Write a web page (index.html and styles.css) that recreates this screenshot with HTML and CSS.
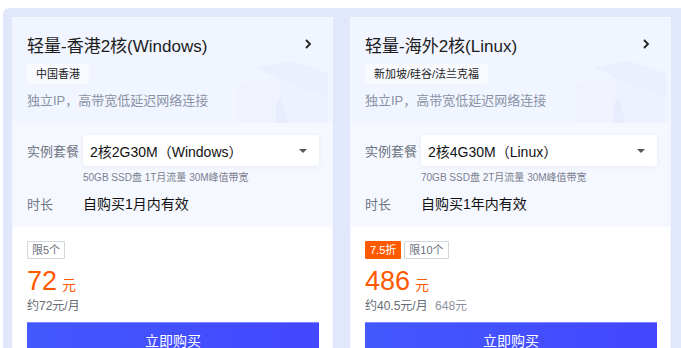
FILE: index.html
```html
<!DOCTYPE html>
<html lang="zh-CN">
<head>
    <meta charset="UTF-8">
    <title>轻量应用服务器</title>
    <link rel="stylesheet" href="styles.css">
</head>
<body>
    <div class="panel">
        <div class="card">
            <div class="card-head">
                <svg class="deco" width="92" height="66" viewBox="0 0 92 66">
                    <path d="M2 26 L40 22 L92 38 L92 66 L2 66 Z" fill="#eef2fe"/>
                    <path d="M20 10 L56 4 L92 16 L92 40 L56 28 Z" fill="#ebf0fe"/>
                    <path d="M30 66 L44 40 L52 66 Z" fill="#e8edfd"/>
                    <path d="M2 26 L40 22 L40 66 L2 66 Z" fill="#f0f3fe"/>
                </svg>
                <div class="title-row">
                    <span class="title">轻量-香港2核(Windows)</span>
                    <svg class="chev" width="8" height="10" viewBox="0 0 8 10"><path d="M2 1 L6 5 L2 9" fill="none" stroke="#222" stroke-width="1.8"/></svg>
                </div>
                <span class="region">中国香港</span>
                <p class="desc">独立IP，高带宽低延迟网络连接</p>
            </div>
            <div class="card-config">
                <div class="row">
                    <span class="label">实例套餐</span>
                    <div class="select">
                        <span>2核2G30M（Windows）</span>
                        <span class="caret"></span>
                    </div>
                </div>
                <div class="spec">50GB SSD盘 1T月流量 30M峰值带宽</div>
                <div class="row">
                    <span class="label">时长</span>
                    <span class="value">自购买1月内有效</span>
                </div>
            </div>
            <div class="card-buy">
                <div class="badges">
                    <span class="limit">限5个</span>
                </div>
                <div class="price"><span class="num">72</span><span class="unit">元</span></div>
                <div class="monthly">约72元/月</div>
                <button class="buy">立即购买</button>
            </div>
        </div>

        <div class="card">
            <div class="card-head">
                <svg class="deco" width="92" height="66" viewBox="0 0 92 66">
                    <path d="M2 26 L40 22 L92 38 L92 66 L2 66 Z" fill="#eef2fe"/>
                    <path d="M20 10 L56 4 L92 16 L92 40 L56 28 Z" fill="#ebf0fe"/>
                    <path d="M30 66 L44 40 L52 66 Z" fill="#e8edfd"/>
                    <path d="M2 26 L40 22 L40 66 L2 66 Z" fill="#f0f3fe"/>
                </svg>
                <div class="title-row">
                    <span class="title">轻量-海外2核(Linux)</span>
                    <svg class="chev" width="8" height="10" viewBox="0 0 8 10"><path d="M2 1 L6 5 L2 9" fill="none" stroke="#222" stroke-width="1.8"/></svg>
                </div>
                <span class="region">新加坡/硅谷/法兰克福</span>
                <p class="desc">独立IP，高带宽低延迟网络连接</p>
            </div>
            <div class="card-config">
                <div class="row">
                    <span class="label">实例套餐</span>
                    <div class="select">
                        <span>2核4G30M（Linux）</span>
                        <span class="caret"></span>
                    </div>
                </div>
                <div class="spec">70GB SSD盘 2T月流量 30M峰值带宽</div>
                <div class="row">
                    <span class="label">时长</span>
                    <span class="value">自购买1年内有效</span>
                </div>
            </div>
            <div class="card-buy">
                <div class="badges">
                    <span class="discount">7.5折</span>
                    <span class="limit">限10个</span>
                </div>
                <div class="price"><span class="num">486</span><span class="unit">元</span></div>
                <div class="monthly">约40.5元/月 <span class="orig">648元</span></div>
                <button class="buy">立即购买</button>
            </div>
        </div>
    </div>
</body>
</html>
```

FILE: styles.css
```css
html,
body {
    height: 100%;
}

body {
    margin: 0;
    font-family: "Liberation Sans", "Noto Sans CJK SC", sans-serif;
    background: #fff;
    overflow: hidden;
}

.panel {
    box-sizing: border-box;
    margin: 8px 0 0 3px;
    padding: 9px 9px 0 9px;
    background: #e2e8fb;
    border-radius: 6px 0 0 0;
    display: grid;
    grid-template-columns: 321px 321px;
    column-gap: 17px;
    height: calc(100% - 8px);
    overflow: hidden;
}

.card {
    background: #fff;
    border: 1px solid #f4f7ff;
    border-bottom: none;
    display: flex;
    flex-direction: column;
    overflow: hidden;
}

.card-head {
    position: relative;
    background: #f1f5ff;
    padding: 12px 14px 0 14px;
    height: 93px;
    flex-shrink: 0;
    overflow: hidden;
}

.deco {
    position: absolute;
    right: 4px;
    bottom: 0;
}

.title-row {
    position: relative;
    display: flex;
    align-items: center;
    justify-content: space-between;
    height: 28px;
}

.title {
    font-size: 17px;
    color: #1c1c1c;
}

.chev {
    margin-right: 6px;
}

.region {
    position: relative;
    display: inline-block;
    margin-top: 6px;
    padding: 0 9px;
    height: 20px;
    line-height: 20px;
    font-size: 11px;
    color: #222;
    background: #f9faff;
    border-radius: 2px;
}

.desc {
    position: relative;
    margin: 6px 0 0 0;
    font-size: 13px;
    color: #8a93a6;
}

.card-config {
    background: #f5f8ff;
    padding: 12px 13px 0 14px;
    height: 92px;
    flex-shrink: 0;
}

.row {
    display: flex;
    align-items: center;
}

.label {
    width: 56px;
    font-size: 13px;
    color: #6d7482;
}

.select {
    flex: 1;
    height: 31px;
    background: #fff;
    border-radius: 3px;
    box-shadow: 0 1px 4px rgba(60, 80, 140, 0.08);
    display: flex;
    align-items: center;
    justify-content: space-between;
    padding: 0 12px 0 7px;
    font-size: 14px;
    color: #111;
}

.caret {
    width: 0;
    height: 0;
    border-left: 4px solid transparent;
    border-right: 4px solid transparent;
    border-top: 4px solid #555;
}

.spec {
    margin: 3px 0 9px 56px;
    font-size: 10px;
    color: #7b8190;
}

.value {
    font-size: 14px;
    color: #111;
}

.card-buy {
    padding: 14px 13px 0 14px;
}

.badges {
    display: flex;
    gap: 3px;
    height: 18px;
}

.limit,
.discount {
    font-size: 11px;
    height: 18px;
    line-height: 16px;
    padding: 0 4px;
    box-sizing: border-box;
    border-radius: 1px;
}

.limit {
    border: 1px solid #d3d6dc;
    color: #6a6f7a;
}

.discount {
    background: #ff5a00;
    color: #fff;
    line-height: 18px;
    padding: 0 5px;
}

.price {
    margin-top: 7px;
    color: #ff5a00;
    height: 30px;
    display: flex;
    align-items: baseline;
}

.num {
    font-size: 27px;
}

.unit {
    font-size: 14px;
    margin-left: 5px;
}

.monthly {
    margin-top: 0;
    font-size: 12px;
    color: #666b75;
}

.orig {
    margin-left: 4px;
    color: #8d929c;
}

.buy {
    margin-top: 9px;
    width: 100%;
    height: 34px;
    border: none;
    border-top: 1px solid #7e86ff;
    background: linear-gradient(90deg, #4358ff 0%, #4447ff 100%);
    color: #fff;
    font-family: "Liberation Sans", "Noto Sans CJK SC", sans-serif;
    font-size: 14px;
    cursor: pointer;
}
```
